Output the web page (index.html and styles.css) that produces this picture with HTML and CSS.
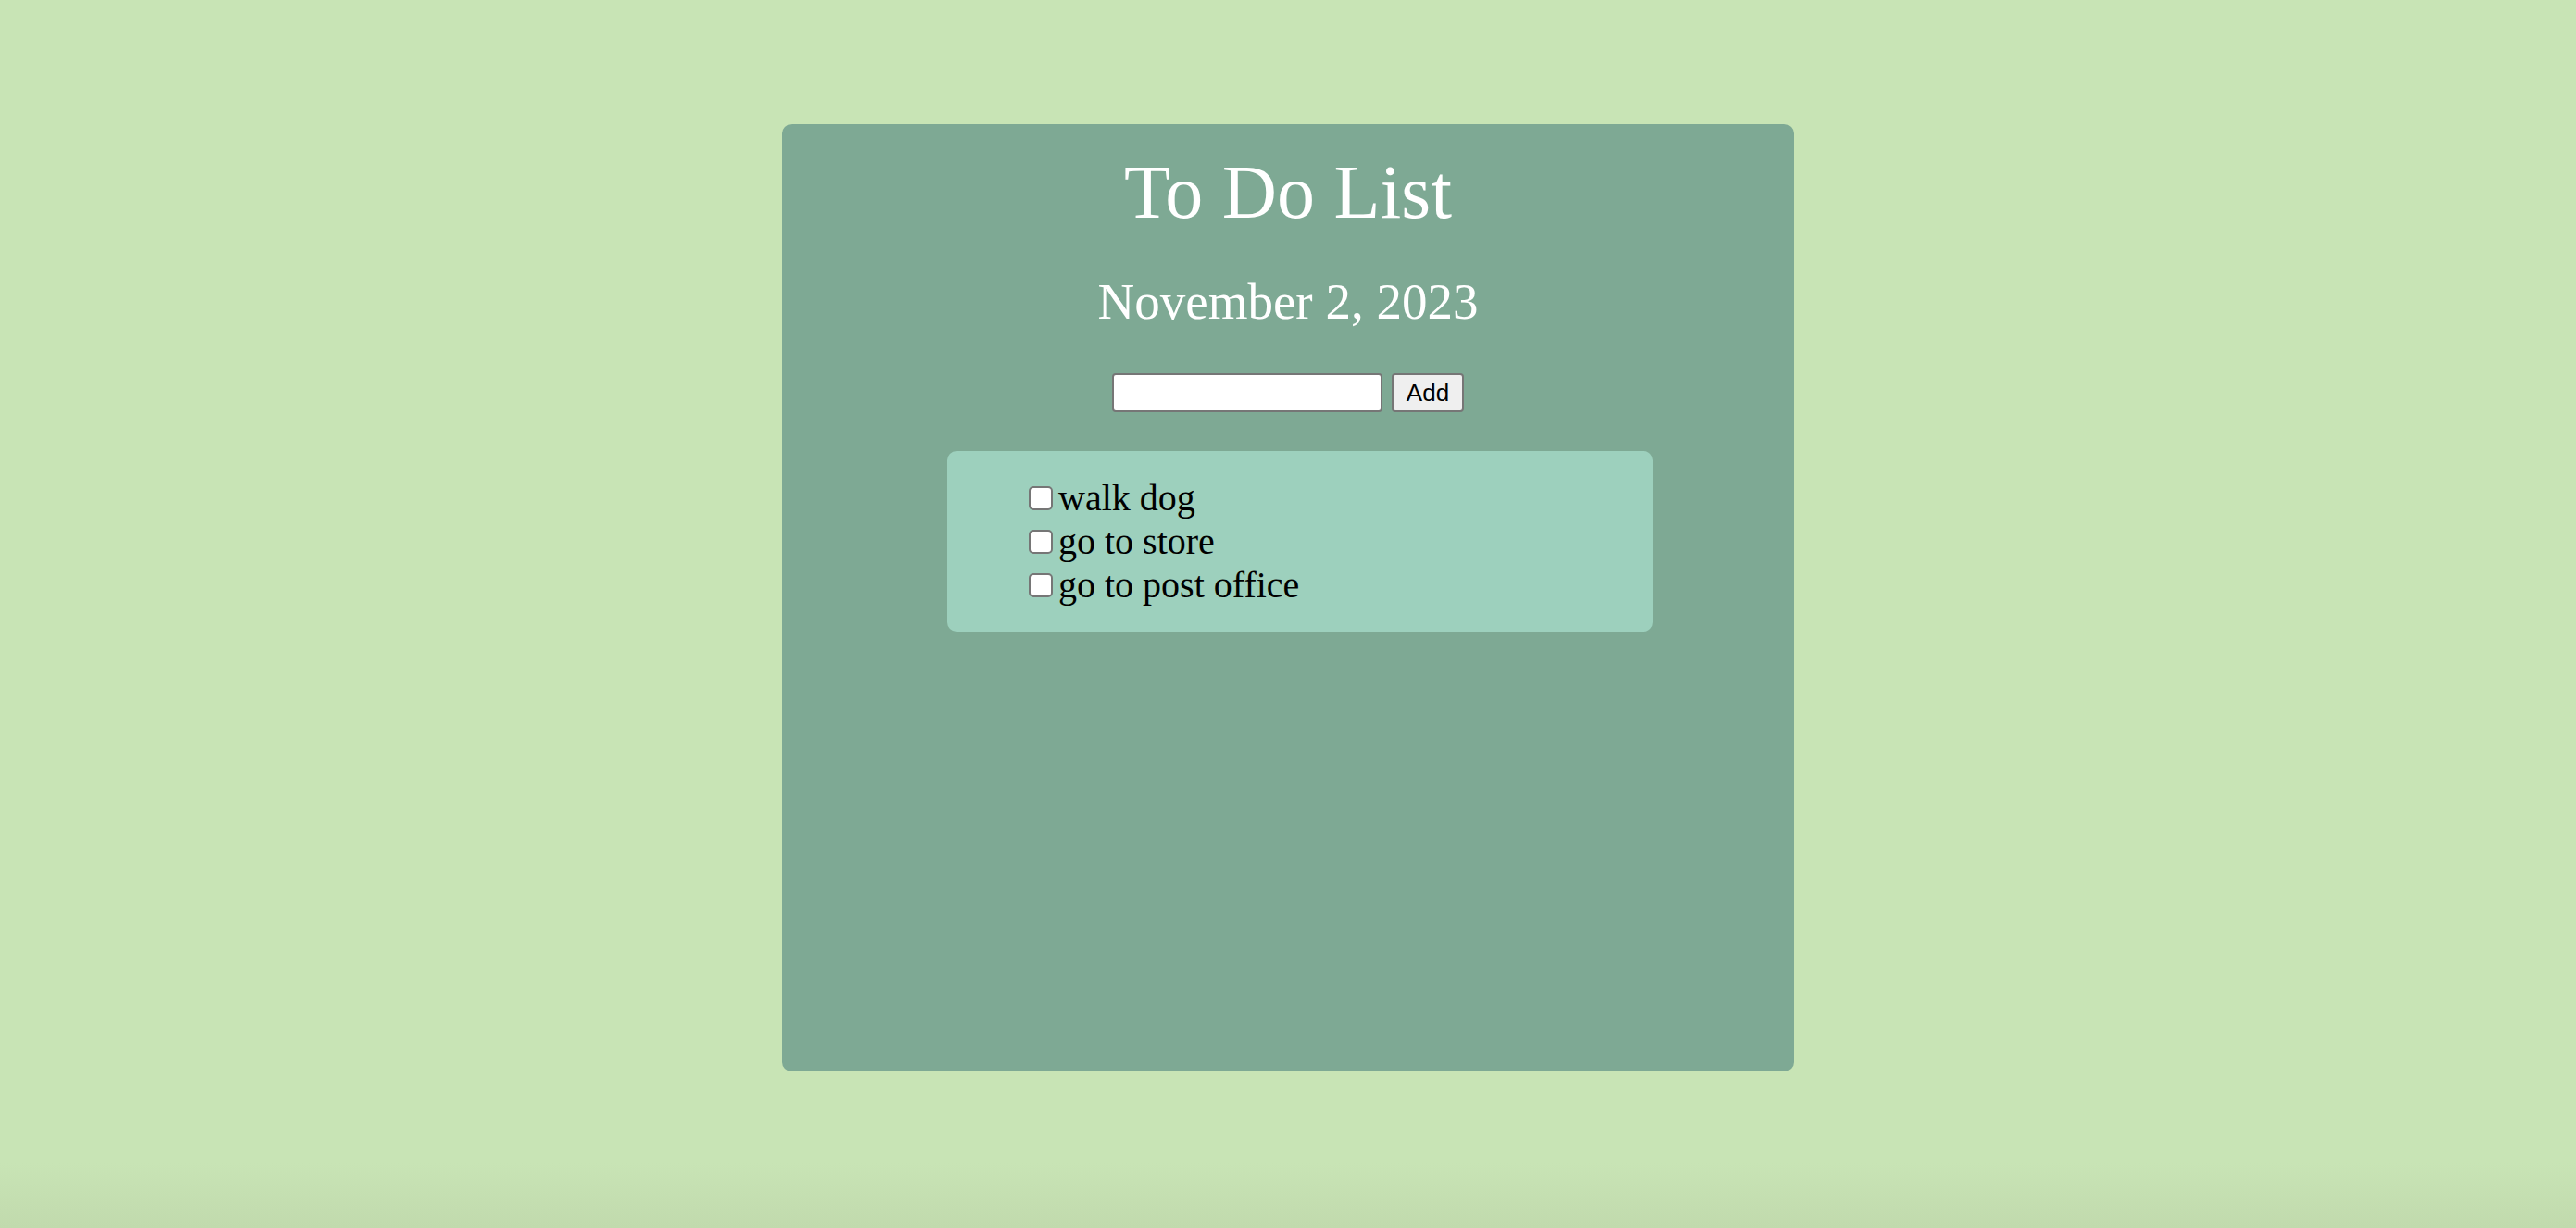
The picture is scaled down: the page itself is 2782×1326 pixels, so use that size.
FILE: index.html
```html
<!DOCTYPE html>
<html lang="en">
<head>
<meta charset="utf-8">
<title>To Do List</title>
<link rel="stylesheet" href="styles.css">
</head>
<body>
<main class="card">
  <h1 class="title">To Do List</h1>
  <h2 class="date">November 2, 2023</h2>
  <form class="add-row">
    <input class="add-input" type="text">
    <button class="add-btn" type="button">Add</button>
  </form>
  <section class="list-box">
    <ul class="todo-list">
      <li class="todo-item"><input class="todo-check" type="checkbox">walk dog</li>
      <li class="todo-item"><input class="todo-check" type="checkbox">go to store</li>
      <li class="todo-item"><input class="todo-check" type="checkbox">go to post office</li>
    </ul>
  </section>
</main>
</body>
</html>
```

FILE: styles.css
```css
html, body {
  margin: 0;
  padding: 0;
}
body {
  min-height: 100vh;
  background: linear-gradient(to bottom, #c8e4b5 0, #c8e4b5 calc(100% - 70px), #c1daad 100%);
  font-family: "Liberation Serif", "Times New Roman", serif;
  display: flex;
  justify-content: center;
  align-items: flex-start;
  box-sizing: border-box;
  padding-top: 134px;
}
.card {
  width: 1092px;
  height: 1023px;
  background: #7ea994;
  border-radius: 10px;
  display: flex;
  flex-direction: column;
  align-items: center;
  box-sizing: border-box;
  padding-top: 27px;
}
.title {
  margin: 0;
  font-size: 82px;
  font-weight: normal;
  color: #ffffff;
  line-height: normal;
}
.date {
  margin: 39px 0 0 0;
  font-size: 55px;
  font-weight: normal;
  color: #ffffff;
  line-height: normal;
}
.add-row {
  margin: 46px 0 0 0;
  display: flex;
  gap: 10px;
}
.add-input {
  width: 292px;
  height: 42px;
  box-sizing: border-box;
  border: 2px solid #767676;
  border-radius: 4px;
  background: #ffffff;
  margin: 0;
  padding: 0 4px;
  font-size: 26px;
}
.add-btn {
  width: 78px;
  height: 42px;
  box-sizing: border-box;
  border: 2px solid #767676;
  border-radius: 4px;
  background: #efefef;
  margin: 0;
  padding: 0;
  font-family: "Liberation Sans", Arial, sans-serif;
  font-size: 26px;
  color: #000000;
}
.list-box {
  align-self: flex-start;
  margin: 42px 0 0 178px;
  width: 762px;
  box-sizing: border-box;
  padding: 27px 0;
  background: #9dd0bd;
  border-radius: 10px;
}
.todo-list {
  list-style: none;
  margin: 0;
  padding: 0 0 0 88px;
}
.todo-item {
  font-size: 40px;
  line-height: 47px;
  color: #000000;
}
.todo-check {
  appearance: none;
  -webkit-appearance: none;
  width: 26px;
  height: 26px;
  margin: 0 6px 0 0;
  box-sizing: border-box;
  border: 2px solid #767676;
  border-radius: 5px;
  background: #ffffff;
  vertical-align: baseline;
}
```
